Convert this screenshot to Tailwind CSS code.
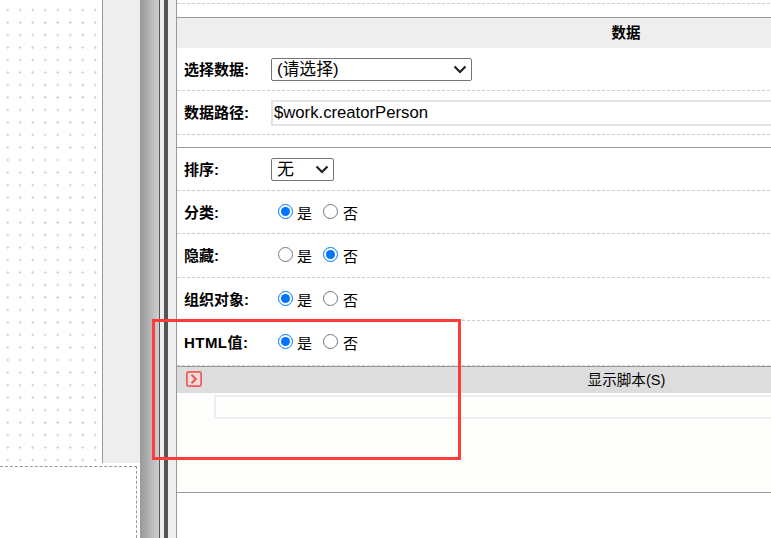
<!DOCTYPE html>
<html lang="zh">
<head>
<meta charset="utf-8">
<script src="https://cdn.jsdelivr.net/npm/@tailwindcss/browser@4"></script>
<title>数据</title>
</head>
<body class="bg-white">
<div class="relative flex w-[771px] h-[538px] overflow-hidden bg-white text-black font-['Liberation_Sans','Noto_Sans_CJK_SC',sans-serif]">
  <!-- canvas side -->
  <div class="w-[140px] shrink-0 flex flex-col">
    <div class="flex h-[463px] shrink-0">
      <div class="w-[103px] border-r border-[#999] bg-white bg-[radial-gradient(circle,#d2d2d2_1px,transparent_1.1px)] bg-size-[12.5px_12.5px] bg-position-[1.5px_3.75px]"></div>
      <div class="flex-1 bg-[#eeeeee]"></div>
    </div>
    <div class="h-[3px] shrink-0"></div>
    <div class="flex-1 w-[137px] border-t border-r border-dashed border-[#999] bg-white"></div>
  </div>
  <!-- splitters -->
  <div class="w-[19px] shrink-0 bg-linear-to-r from-[#999999] to-[#cfcfcf]"></div>
  <div class="w-px shrink-0 bg-[#555]"></div>
  <div class="w-[4px] shrink-0 bg-[#eeeeee]"></div>
  <div class="w-[4px] shrink-0 bg-[#555]"></div>
  <div class="w-[8px] shrink-0 bg-[#eeeeee]"></div>
  <!-- property panel -->
  <div class="flex-1 min-w-0 overflow-hidden border-l border-[#999]">
    <div class="w-[898px]">
      <div class="h-[4px] border-b border-dashed border-[#ccc]"></div>
      <div class="h-[14px] border-b border-[#999]"></div>
      <div class="h-[30px] flex items-center justify-center bg-[#eeeeee] text-[14.5px] font-bold pt-[2px]">数据</div>

      <div class="h-[43px] flex items-center border-b border-dashed border-[#ccc]">
        <div class="w-[94px] shrink-0 pl-[7px] pt-[2px] text-[15px] font-bold">选择数据:</div>
        <div class="relative w-[201px] h-[23px] mt-[1px] border border-[#767676] rounded-[2px] pl-[5px] text-[16.8px] leading-[21px]">(请选择)
          <svg class="absolute right-[4px] top-[6px]" width="14" height="9" viewBox="0 0 14 9" fill="none" stroke="#222" stroke-width="2.2"><path d="M1.5 1.5 7 7l5.5-5.5"/></svg>
        </div>
      </div>

      <div class="h-[44px] flex items-center border-b border-dashed border-[#ccc]">
        <div class="w-[94px] shrink-0 pl-[7px] pt-[2px] text-[15px] font-bold">数据路径:</div>
        <div class="flex-1 h-[26px] mt-[1px] border-2 border-r-0 border-[#e4e4e4] pl-[1px] text-[16.7px] leading-[21px]">$work.creatorPerson</div>
      </div>

      <div class="h-[13px] border-b border-[#999]"></div>

      <div class="h-[43px] flex items-center border-b border-dashed border-[#ccc]">
        <div class="w-[94px] shrink-0 pl-[7px] pt-[2px] text-[15px] font-bold">排序:</div>
        <div class="relative w-[63px] h-[23px] border border-[#767676] rounded-[2px] pl-[5px] text-[17px] leading-[21px]">无
          <svg class="absolute right-[4px] top-[6px]" width="14" height="9" viewBox="0 0 14 9" fill="none" stroke="#222" stroke-width="2.2"><path d="M1.5 1.5 7 7l5.5-5.5"/></svg>
        </div>
      </div>

      <div class="h-[43px] flex items-center border-b border-dashed border-[#ccc]">
        <div class="w-[94px] shrink-0 pl-[7px] pt-[2px] text-[15px] font-bold">分类:</div>
        <div class="flex items-center text-[15px] pl-[7px]">
          <input type="radio" name="a" checked class="w-[15px] h-[15px] m-0 mt-[-2px]"><span class="ml-[4px] mr-[11px] mt-[4px]">是</span>
          <input type="radio" name="a" class="w-[15px] h-[15px] m-0 mt-[-2px]"><span class="ml-[5px] mt-[4px]">否</span>
        </div>
      </div>

      <div class="h-[44px] flex items-center border-b border-dashed border-[#ccc]">
        <div class="w-[94px] shrink-0 pl-[7px] pt-[2px] text-[15px] font-bold">隐藏:</div>
        <div class="flex items-center text-[15px] pl-[7px]">
          <input type="radio" name="b" class="w-[15px] h-[15px] m-0 mt-[-2px]"><span class="ml-[4px] mr-[11px] mt-[4px]">是</span>
          <input type="radio" name="b" checked class="w-[15px] h-[15px] m-0 mt-[-2px]"><span class="ml-[5px] mt-[4px]">否</span>
        </div>
      </div>

      <div class="h-[43px] flex items-center border-b border-dashed border-[#ccc]">
        <div class="w-[94px] shrink-0 pl-[7px] pt-[2px] text-[15px] font-bold">组织对象:</div>
        <div class="flex items-center text-[15px] pl-[7px]">
          <input type="radio" name="c" checked class="w-[15px] h-[15px] m-0 mt-[-2px]"><span class="ml-[4px] mr-[11px] mt-[4px]">是</span>
          <input type="radio" name="c" class="w-[15px] h-[15px] m-0 mt-[-2px]"><span class="ml-[5px] mt-[4px]">否</span>
        </div>
      </div>

      <div class="h-[45px] pb-[2px] flex items-center border-b border-dashed border-[#ccc]">
        <div class="w-[94px] shrink-0 pl-[7px] pt-[2px] text-[15px] font-bold tracking-[0.45px]">HTML值:</div>
        <div class="flex items-center text-[15px] pl-[7px]">
          <input type="radio" name="d" checked class="w-[15px] h-[15px] m-0 mt-[-2px]"><span class="ml-[4px] mr-[11px] mt-[4px]">是</span>
          <input type="radio" name="d" class="w-[15px] h-[15px] m-0 mt-[-2px]"><span class="ml-[5px] mt-[4px]">否</span>
        </div>
      </div>

      <div class="relative h-[27px] flex items-center justify-center border-t border-[#999] bg-[#dddddd] text-[14.6px] pt-[2px] pl-[1px]">
        显示脚本(S)
        <svg class="absolute left-[9px] top-[4px]" width="16" height="16" viewBox="0 0 16 16" fill="#f4dcd8" stroke="#ee5a5a"><rect x="0.9" y="0.9" width="14.2" height="14.2" rx="2" stroke-width="1.7"/><path d="M5.5 3.8 9.8 8 5.5 12.2" fill="none" stroke-width="2.2"/></svg>
      </div>
      <div class="h-[100px] pt-[2px] pl-[37px] bg-[#fdfdfb] border-b border-[#999]">
        <div class="h-[24px] border-2 border-[#eeeeee]"></div>
      </div>
    </div>
  </div>
  <!-- red annotation -->
  <div class="absolute left-[152px] top-[319px] w-[309px] h-[141px] border-[3px] border-[#ff3b3b]"></div>
</div>
</body>
</html>
